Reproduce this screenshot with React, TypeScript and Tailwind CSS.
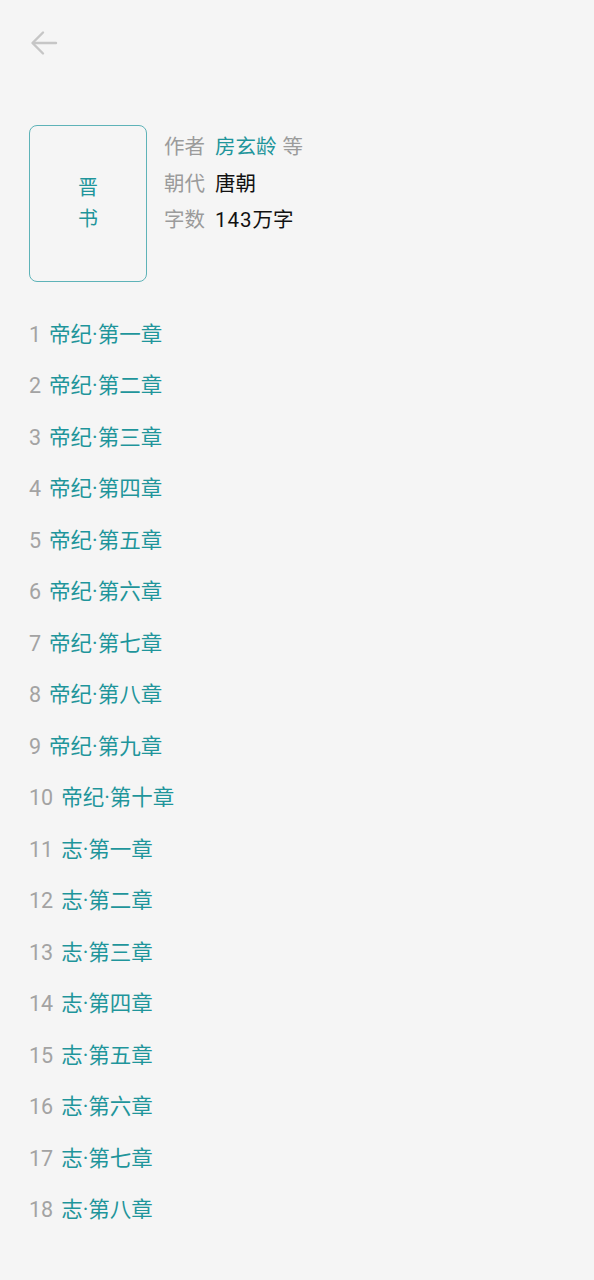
const chapters = [
  '帝纪·第一章',
  '帝纪·第二章',
  '帝纪·第三章',
  '帝纪·第四章',
  '帝纪·第五章',
  '帝纪·第六章',
  '帝纪·第七章',
  '帝纪·第八章',
  '帝纪·第九章',
  '帝纪·第十章',
  '志·第一章',
  '志·第二章',
  '志·第三章',
  '志·第四章',
  '志·第五章',
  '志·第六章',
  '志·第七章',
  '志·第八章',
];

function BackArrow() {
  return (
    <svg width="28" height="28" viewBox="0 0 28 28" fill="none" stroke="#c6c6c6" strokeWidth="2.4" strokeLinecap="round" strokeLinejoin="round">
      <path d="M26 14H3" />
      <path d="M13 3.5L2.5 14L13 24.5" />
    </svg>
  );
}

export default function App() {
  return (
    <div
      className="min-h-[1280px] w-full bg-[#f5f5f5] text-[21.5px]"
      style={{ fontFamily: 'Roboto, "Noto Sans CJK SC", sans-serif' }}
    >
      <div className="pl-[30px] pt-[29px]">
        <button className="flex h-[28px] w-[28px] items-center justify-center">
          <BackArrow />
        </button>
      </div>

      <div className="mt-[68px] flex gap-[17px] px-[29px]">
        <div className="flex h-[157px] w-[118px] flex-col items-center justify-center rounded-[8px] border-[1.5px] border-[#5eb3b8] text-[20px] leading-[31px] text-[#1f959b]">
          <span>晋</span>
          <span>书</span>
        </div>
        <div className="flex flex-col pt-[4px] text-[20.5px] leading-[36.5px]">
          <p className="flex gap-[10px]">
            <span className="text-[#9b9b9b]">作者</span>
            <span>
              <span className="text-[#1f959b]">房玄龄</span>
              <span className="ml-[6px] text-[#9b9b9b]">等</span>
            </span>
          </p>
          <p className="flex gap-[10px]">
            <span className="text-[#9b9b9b]">朝代</span>
            <span className="text-[#111]">唐朝</span>
          </p>
          <p className="flex gap-[10px]">
            <span className="text-[#9b9b9b]">字数</span>
            <span className="text-[#111]">
              <span className="tracking-[1px]">143</span>万字
            </span>
          </p>
        </div>
      </div>

      <ul className="mt-[27px] px-[29px]">
        {chapters.map((title, i) => (
          <li key={title} className="flex h-[51.5px] items-center gap-[8px]">
            <span className="text-[#a3a3a3]">{i + 1}</span>
            <span className="text-[#1f959b]">{title}</span>
          </li>
        ))}
      </ul>
    </div>
  );
}
